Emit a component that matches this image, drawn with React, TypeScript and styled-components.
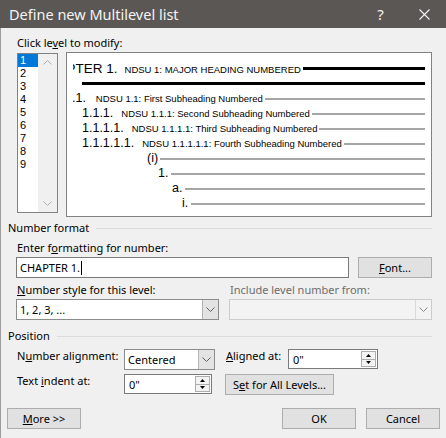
import React from "react";
import styled, { createGlobalStyle } from "styled-components";

const GlobalStyle = createGlobalStyle`
  html, body { margin: 0; padding: 0; background: #f0f0f0; }
  #root { width: 446px; height: 438px; }
`;

const UI_FONT = `"Noto Sans", "Segoe UI", Arial, sans-serif`;
const PREVIEW_FONT = `"Liberation Sans", Arial, sans-serif`;

const Dialog = styled.div`
  width: 446px;
  height: 438px;
  display: flex;
  flex-direction: column;
  background: #f0f0f0;
  font-family: ${UI_FONT};
  font-size: 11px;
  color: #000;
  overflow: hidden;
`;

const TitleBar = styled.div`
  height: 28px;
  flex-shrink: 0;
  background: #5a5754;
  color: #f4f4f4;
  display: flex;
  align-items: center;
  padding-left: 9px;
  font-size: 14.5px;
`;

const TitleText = styled.div`
  flex: 1;
  white-space: nowrap;
`;

const TitleButton = styled.div<{ $width: number }>`
  width: ${(p) => p.$width}px;
  height: 28px;
  display: flex;
  align-items: center;
  justify-content: center;
  font-size: 15px;
`;

const Body = styled.div`
  flex: 1;
  display: flex;
  flex-direction: column;
  border-left: 1px solid #9c9c9c;
  padding: 8px 14px 0 15px;
`;

const Label = styled.div<{ $disabled?: boolean }>`
  line-height: 14px;
  white-space: nowrap;
  color: ${(p) => (p.$disabled ? "#6d6d6d" : "#000")};
`;

const TopLabel = styled(Label)`
  margin-left: 1px;
`;

const U = styled.span`
  text-decoration: underline;
  text-underline-offset: 1px;
`;

const TopRow = styled.div`
  display: flex;
  align-items: flex-start;
  gap: 8px;
  margin-top: 2px;
  margin-left: 1px;
`;

const ListBox = styled.div`
  width: 41px;
  height: 160px;
  margin-top: 1px;
  box-sizing: border-box;
  border: 1px solid #828282;
  background: #fff;
  display: flex;
`;

const ListItems = styled.div`
  width: 20px;
  display: flex;
  flex-direction: column;
`;

const ListItem = styled.div<{ $selected?: boolean }>`
  height: 13px;
  line-height: 13px;
  padding-left: 2px;
  font-family: ${PREVIEW_FONT};
  font-size: 11px;
  overflow: hidden;
  background: ${(p) => (p.$selected ? "#0078d7" : "transparent")};
  color: ${(p) => (p.$selected ? "#fff" : "#000")};
`;

const ScrollBar = styled.div`
  flex: 1;
  background: #f0f0f0;
  display: flex;
  flex-direction: column;
  justify-content: space-between;
  align-items: center;
  padding: 6px 0 6px;
`;

const Preview = styled.div`
  flex: 1;
  height: 165px;
  box-sizing: border-box;
  border: 1px solid #828282;
  background: #fff;
  padding: 8px 6px 0 6px;
  font-family: ${PREVIEW_FONT};
`;

const PreviewClip = styled.div`
  overflow: hidden;
`;

const PreviewRow = styled.div`
  height: 15px;
  display: flex;
  align-items: center;
  white-space: nowrap;
`;

const RowText = styled.span<{ $indent: number; $size: number }>`
  display: block;
  flex-shrink: 0;
  margin-left: ${(p) => p.$indent}px;
  font-size: ${(p) => p.$size}px;
  line-height: 15px;
  color: #000;
`;

const Caption = styled.span<{ $gap: number }>`
  margin-left: ${(p) => p.$gap}px;
  font-size: 9.5px;
`;

const Rule = styled.span<{ $heavy?: boolean; $gap: number }>`
  flex: 1;
  min-width: 0;
  height: ${(p) => (p.$heavy ? 3 : 2)}px;
  margin-left: ${(p) => p.$gap}px;
  background: ${(p) => (p.$heavy ? "#000" : "#a6a6a6")};
`;

const GroupHeading = styled.div<{ $top: number }>`
  display: flex;
  align-items: center;
  gap: 7px;
  margin-top: ${(p) => p.$top}px;
  margin-left: -8px;
  line-height: 14px;
  white-space: nowrap;
  &::after {
    content: "";
    flex: 1;
    height: 1px;
    background: #dcdcdc;
  }
`;

const FieldLabel = styled(Label)<{ $top: number }>`
  margin-top: ${(p) => p.$top}px;
  margin-left: 1px;
`;

const InputRow = styled.div`
  display: flex;
  gap: 9px;
  margin-top: 2px;
`;

const TextBox = styled.div`
  flex: 1;
  height: 21px;
  box-sizing: border-box;
  border: 1px solid #7a7a7a;
  background: #fff;
  display: flex;
  align-items: center;
  padding-left: 3px;
  white-space: nowrap;
`;

const Caret = styled.span`
  display: inline-block;
  width: 1px;
  height: 14px;
  background: #000;
  margin-left: 1px;
`;

const Button = styled.button<{ $width: number }>`
  width: ${(p) => p.$width}px;
  height: 21px;
  box-sizing: border-box;
  border: 1px solid #adadad;
  background: #e1e1e1;
  font-family: ${UI_FONT};
  font-size: 11px;
  color: #000;
  padding: 0;
  margin: 0;
  white-space: nowrap;
`;

const StyleGrid = styled.div`
  display: grid;
  grid-template-columns: 1fr 1fr;
  column-gap: 10px;
  row-gap: 2px;
  margin-top: 5px;
  & > ${Label} {
    margin-left: 1px;
  }
`;

const Select = styled.div<{ $disabled?: boolean; $width?: number }>`
  width: ${(p) => (p.$width ? `${p.$width}px` : "auto")};
  height: 21px;
  box-sizing: border-box;
  border: 1px solid ${(p) => (p.$disabled ? "#cccccc" : "#8c8c8c")};
  background: ${(p) => (p.$disabled ? "#f3f3f3" : "#fff")};
  display: flex;
  align-items: stretch;
`;

const SelectValue = styled.div`
  flex: 1;
  display: flex;
  align-items: center;
  padding-left: 3px;
  white-space: nowrap;
`;

const DropButton = styled.div<{ $disabled?: boolean }>`
  width: 15px;
  background: ${(p) => (p.$disabled ? "#f3f3f3" : "#e3e3e3")};
  border-left: 1px solid ${(p) => (p.$disabled ? "#d9d9d9" : "#b4b4b4")};
  display: flex;
  align-items: center;
  justify-content: center;
`;

const PositionGrid = styled.div`
  display: grid;
  grid-template-columns: 108px 101px 63px 90px;
  grid-template-rows: 21px 21px;
  row-gap: 4px;
  margin-top: 6px;
  & > ${Label} {
    align-self: start;
    margin-left: 1px;
  }
`;

const SpinBox = styled.div<{ $width: number }>`
  width: ${(p) => p.$width}px;
  height: 20px;
  box-sizing: border-box;
  border: 1px solid #7a7a7a;
  background: #fff;
  display: flex;
`;

const SpinValue = styled.div`
  flex: 1;
  display: flex;
  align-items: center;
  padding-left: 4px;
`;

const SpinButtons = styled.div`
  width: 13px;
  margin: 1px 1px 1px 0;
  border: 1px solid #adadad;
  display: flex;
  flex-direction: column;
  background: #f3f3f3;
`;

const SpinHalf = styled.div`
  flex: 1;
  display: flex;
  align-items: center;
  justify-content: center;
  & + & {
    border-top: 1px solid #adadad;
  }
`;

const SetAllCell = styled.div`
  grid-column: 3 / span 2;
`;

const Footer = styled.div`
  display: flex;
  gap: 10px;
  margin: 13px -8px 0 -9px;
`;

const Spacer = styled.div`
  flex: 1;
`;

const Chevron = ({ color = "#606060" }: { color?: string }) => (
  <svg width="9" height="5" viewBox="0 0 9 5">
    <polyline points="0.5,0.5 4.5,4.5 8.5,0.5" fill="none" stroke={color} strokeWidth="1" />
  </svg>
);

const ChevronUp = ({ color }: { color: string }) => (
  <svg width="9" height="5" viewBox="0 0 9 5">
    <polyline points="0.5,4.5 4.5,0.5 8.5,4.5" fill="none" stroke={color} strokeWidth="1" />
  </svg>
);

const Tri = ({ up }: { up?: boolean }) => (
  <svg width="5" height="3" viewBox="0 0 5 3">
    <polygon points={up ? "0,3 2.5,0 5,3" : "0,0 5,0 2.5,3"} fill="#000" />
  </svg>
);

const DropDown = ({ value, disabled, width }: { value?: string; disabled?: boolean; width?: number }) => (
  <Select $disabled={disabled} $width={width}>
    <SelectValue>{value}</SelectValue>
    <DropButton $disabled={disabled}>
      <Chevron color={disabled ? "#8a8a8a" : "#606060"} />
    </DropButton>
  </Select>
);

const Spin = ({ value, width }: { value: string; width: number }) => (
  <SpinBox $width={width}>
    <SpinValue>{value}</SpinValue>
    <SpinButtons>
      <SpinHalf>
        <Tri up />
      </SpinHalf>
      <SpinHalf>
        <Tri />
      </SpinHalf>
    </SpinButtons>
  </SpinBox>
);

type PRow = {
  indent: number;
  num?: string;
  size?: number;
  text?: string;
  gap?: number;
  heavy?: boolean;
  ruleGap?: number;
};

const rows: PRow[] = [
  { indent: -35, num: "CHAPTER 1.", size: 13.5, text: "NDSU 1: MAJOR HEADING NUMBERED", gap: 7, heavy: true },
  { indent: 9, heavy: true },
  { indent: -8, num: "1.1.", size: 12.5, text: "NDSU 1.1: First Subheading Numbered", gap: 10 },
  { indent: 9, num: "1.1.1.", size: 12.5, text: "NDSU 1.1.1: Second Subheading Numbered", gap: 8 },
  { indent: 9, num: "1.1.1.1.", size: 12.5, text: "NDSU 1.1.1.1: Third Subheading Numbered", gap: 8 },
  { indent: 9, num: "1.1.1.1.1.", size: 12.5, text: "NDSU 1.1.1.1.1: Fourth Subheading Numbered", gap: 8 },
  { indent: 74, num: "(i)", size: 12.5 },
  { indent: 85, num: "1.", size: 12.5, ruleGap: 3 },
  { indent: 99, num: "a.", size: 12.5, ruleGap: 3 },
  { indent: 109, num: "i.", size: 12.5, ruleGap: 3 },
];

const levels = ["1", "2", "3", "4", "5", "6", "7", "8", "9"];

export default function App() {
  return (
    <>
      <GlobalStyle />
      <Dialog>
        <TitleBar>
          <TitleText>Define new Multilevel list</TitleText>
          <TitleButton $width={45}>?</TitleButton>
          <TitleButton $width={43}>
            <svg width="11" height="11" viewBox="0 0 11 11">
              <path d="M0.5 0.5 L10.5 10.5 M10.5 0.5 L0.5 10.5" stroke="#f4f4f4" strokeWidth="1.1" />
            </svg>
          </TitleButton>
        </TitleBar>
        <Body>
          <TopLabel>
            Click le<U>v</U>el to modify:
          </TopLabel>
          <TopRow>
            <ListBox>
              <ListItems>
                {levels.map((l, i) => (
                  <ListItem key={l} $selected={i === 0}>
                    {l}
                  </ListItem>
                ))}
              </ListItems>
              <ScrollBar>
                <ChevronUp color="#b0b0b0" />
                <Chevron color="#b0b0b0" />
              </ScrollBar>
            </ListBox>
            <Preview>
              <PreviewClip>
                {rows.map((r, i) => (
                  <PreviewRow key={i}>
                    {r.num ? (
                      <>
                        <RowText $indent={r.indent} $size={r.size ?? 12.5}>
                          {r.num}
                          {r.text && <Caption $gap={r.gap ?? 8}>{r.text}</Caption>}
                        </RowText>
                        <Rule $heavy={r.heavy} $gap={r.ruleGap ?? 2} />
                      </>
                    ) : (
                      <Rule $heavy={r.heavy} $gap={r.indent} />
                    )}
                  </PreviewRow>
                ))}
              </PreviewClip>
            </Preview>
          </TopRow>

          <GroupHeading $top={4}>Number format</GroupHeading>
          <FieldLabel $top={6}>
            Enter f<U>o</U>rmatting for number:
          </FieldLabel>
          <InputRow>
            <TextBox>
              CHAPTER 1.
              <Caret />
            </TextBox>
            <Button $width={74}>
              <U>F</U>ont...
            </Button>
          </InputRow>
          <StyleGrid>
            <Label>
              <U>N</U>umber style for this level:
            </Label>
            <Label $disabled>Include level number from:</Label>
            <DropDown value="1, 2, 3, ..." />
            <DropDown disabled />
          </StyleGrid>

          <GroupHeading $top={9}>Position</GroupHeading>
          <PositionGrid>
            <Label>
              N<U>u</U>mber alignment:
            </Label>
            <DropDown value="Centered" width={91} />
            <Label>
              <U>A</U>ligned at:
            </Label>
            <Spin value={'0"'} width={90} />
            <Label>
              Text <U>i</U>ndent at:
            </Label>
            <Spin value={'0"'} width={88} />
            <SetAllCell>
              <Button $width={109}>
                S<U>e</U>t for All Levels...
              </Button>
            </SetAllCell>
          </PositionGrid>

          <Footer>
            <Button $width={74}>
              <U>M</U>ore &gt;&gt;
            </Button>
            <Spacer />
            <Button $width={74}>OK</Button>
            <Button $width={74}>Cancel</Button>
          </Footer>
        </Body>
      </Dialog>
    </>
  );
}
